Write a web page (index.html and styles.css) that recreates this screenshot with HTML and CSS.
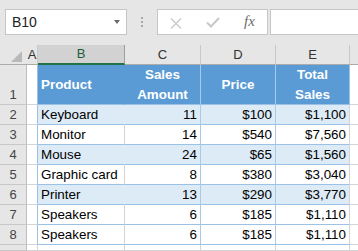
FILE: index.html
```html
<!DOCTYPE html>
<html lang="en">
<head>
    <meta charset="UTF-8">
    <meta name="viewport" content="width=device-width, initial-scale=1.0">
    <title>Sales Table</title>
    <link rel="stylesheet" href="styles.css">
</head>
<body>
    <div class="toolbar">
        <div class="namebox">
            <span>B10</span>
            <span class="arrow"></span>
        </div>
        <div class="grip"><i></i><i></i><i></i></div>
        <div class="fbuttons">
            <svg class="icon-x" width="12" height="11" viewBox="0 0 12 11">
                <path d="M1 0.5 L11 10.5 M11 0.5 L1 10.5" stroke="#c8c8c8" stroke-width="1.3" fill="none"/>
            </svg>
            <svg class="icon-check" width="14" height="11" viewBox="0 0 14 11">
                <path d="M1 5.5 L5 9.5 L13 1" stroke="#c8c8c8" stroke-width="2" fill="none"/>
            </svg>
            <span class="fx">fx</span>
        </div>
        <div class="formula"></div>
    </div>

    <div class="sheet">
        <div class="row">
            <div class="corner"><span class="tri"></span></div>
            <div class="ch">A</div>
            <div class="ch sel">B</div>
            <div class="ch">C</div>
            <div class="ch">D</div>
            <div class="ch">E</div>
            <div class="ch last"></div>
        </div>

        <div class="row head">
            <div class="rh bottom">1</div>
            <div class="c edge"></div>
            <div class="c t th first left">Product</div>
            <div class="c t th">Sales<br>Amount</div>
            <div class="c t th">Price</div>
            <div class="c t th end">Total<br>Sales</div>
            <div class="c out"></div>
        </div>

        <div class="row band">
            <div class="rh">2</div>
            <div class="c edge"></div>
            <div class="c t first">Keyboard</div>
            <div class="c t num">11</div>
            <div class="c t num">$100</div>
            <div class="c t num end">$1,100</div>
            <div class="c out"></div>
        </div>
        <div class="row">
            <div class="rh">3</div>
            <div class="c edge"></div>
            <div class="c t first">Monitor</div>
            <div class="c t num">14</div>
            <div class="c t num">$540</div>
            <div class="c t num end">$7,560</div>
            <div class="c out"></div>
        </div>
        <div class="row band">
            <div class="rh">4</div>
            <div class="c edge"></div>
            <div class="c t first">Mouse</div>
            <div class="c t num">24</div>
            <div class="c t num">$65</div>
            <div class="c t num end">$1,560</div>
            <div class="c out"></div>
        </div>
        <div class="row">
            <div class="rh">5</div>
            <div class="c edge"></div>
            <div class="c t first">Graphic card</div>
            <div class="c t num">8</div>
            <div class="c t num">$380</div>
            <div class="c t num end">$3,040</div>
            <div class="c out"></div>
        </div>
        <div class="row band">
            <div class="rh">6</div>
            <div class="c edge"></div>
            <div class="c t first">Printer</div>
            <div class="c t num">13</div>
            <div class="c t num">$290</div>
            <div class="c t num end">$3,770</div>
            <div class="c out"></div>
        </div>
        <div class="row">
            <div class="rh">7</div>
            <div class="c edge"></div>
            <div class="c t first">Speakers</div>
            <div class="c t num">6</div>
            <div class="c t num">$185</div>
            <div class="c t num end">$1,110</div>
            <div class="c out"></div>
        </div>
        <div class="row">
            <div class="rh">8</div>
            <div class="c edge"></div>
            <div class="c t first">Speakers</div>
            <div class="c t num">6</div>
            <div class="c t num">$185</div>
            <div class="c t num end">$1,110</div>
            <div class="c out"></div>
        </div>

        <div class="row">
            <div class="rh"></div>
            <div class="c"></div>
            <div class="c"></div>
            <div class="c"></div>
            <div class="c"></div>
            <div class="c"></div>
            <div class="c out"></div>
        </div>
    </div>
</body>
</html>
```

FILE: styles.css
```css
body {
    margin: 0;
    width: 358px;
    height: 251px;
    overflow: hidden;
    background-color: #fff;
    font-family: "Liberation Sans", Arial, sans-serif;
}
.toolbar {
    display: flex;
    align-items: flex-start;
    height: 45px;
    box-sizing: border-box;
    padding: 9px 0 0 5px;
    background-color: #e6e6e6;
    overflow: hidden;
}
.namebox {
    display: flex;
    align-items: center;
    flex: none;
    width: 122px;
    height: 26px;
    box-sizing: border-box;
    padding-left: 6px;
    background-color: #fff;
    border: 1px solid #c6c6c6;
    font-size: 14px;
    color: #222;
}
.arrow {
    margin-left: auto;
    margin-right: 6px;
    width: 0;
    height: 0;
    border-left: 3.5px solid transparent;
    border-right: 3.5px solid transparent;
    border-top: 4px solid #6a6a6a;
}
.grip {
    display: flex;
    flex-direction: column;
    align-items: center;
    justify-content: center;
    gap: 2px;
    flex: none;
    width: 30px;
    height: 26px;
}
.grip i {
    display: block;
    width: 2px;
    height: 2px;
    background-color: #a9a9a9;
}
.fbuttons {
    display: flex;
    align-items: center;
    flex: none;
    width: 111px;
    height: 26px;
    box-sizing: border-box;
    padding-left: 12px;
    background-color: #fff;
    border: 1px solid #c6c6c6;
}
.icon-x {
    display: block;
    margin-top: 2px;
}
.icon-check {
    display: block;
    margin-left: 24px;
}
.fx {
    margin-left: 24px;
    margin-top: -1px;
    font-family: "Liberation Serif", serif;
    font-style: italic;
    font-size: 15px;
    color: #6d6d6d;
}
.formula {
    flex: none;
    width: 120px;
    height: 26px;
    margin-left: 2px;
    box-sizing: border-box;
    background-color: #fff;
    border: 1px solid #c6c6c6;
}

.sheet {
    display: grid;
    grid-template-columns: 27px 11px 87px 76px 75px 74px 1fr;
    grid-template-rows: 20px 40px repeat(7, 20px) 6px;
    overflow: hidden;
    font-size: 13.4px;
    color: #000;
}
.row {
    display: contents;
}
.corner {
    display: flex;
    justify-content: flex-end;
    align-items: flex-end;
    box-sizing: border-box;
    padding: 0 5px 2px 0;
    background-color: #e6e6e6;
    border-bottom: 1px solid #ababab;
}
.tri {
    width: 0;
    height: 0;
    border-left: 11px solid transparent;
    border-bottom: 11px solid #b9b9b9;
}
.ch {
    box-sizing: border-box;
    background-color: #e6e6e6;
    border-right: 1px solid #c8c8c8;
    border-bottom: 1px solid #ababab;
    text-align: center;
    line-height: 19px;
    font-size: 13px;
    color: #333;
}
.ch.sel {
    background-color: #d2d2d2;
    border-right-color: #9e9e9e;
    border-bottom: 2px solid #217346;
    line-height: 18px;
    color: #1d5c39;
}
.ch.last {
    border-right: none;
}
.rh {
    box-sizing: border-box;
    background-color: #e6e6e6;
    border-right: 1px solid #bdbdbd;
    border-bottom: 1px solid #c8c8c8;
    text-align: center;
    line-height: 20px;
    font-size: 13px;
    color: #444;
}
.rh.bottom {
    display: flex;
    align-items: flex-end;
    justify-content: center;
    line-height: 19px;
}
.c {
    box-sizing: border-box;
    padding: 0 3px;
    border-right: 1px solid #d4d4d4;
    border-bottom: 1px solid #d4d4d4;
    line-height: 19px;
    white-space: nowrap;
    overflow: hidden;
}
.c.edge {
    border-right-color: #9bc2e6;
}
.c.out {
    border-right: none;
}
.c.t {
    border-bottom-color: #9bc2e6;
    border-right-color: #aac9e8;
}
.c.t.end {
    border-right-color: #d4d4d4;
}
.c.t.first {
    border-right-color: #d4d4d4;
}
.band .c.t {
    background-color: #ddebf7;
}
.band .c.t.first {
    border-right-color: transparent;
}
.num {
    text-align: right;
}
.th {
    display: flex;
    flex-direction: column;
    align-items: center;
    justify-content: center;
    text-align: center;
    background-color: #5b9bd5;
    font-weight: bold;
    color: #fff;
    line-height: 20px;
}
.th.left {
    align-items: flex-start;
}
.head .c.t.first {
    border-right-color: transparent;
}
.head .c.t.end {
    border-right-color: #9bc2e6;
}
```
